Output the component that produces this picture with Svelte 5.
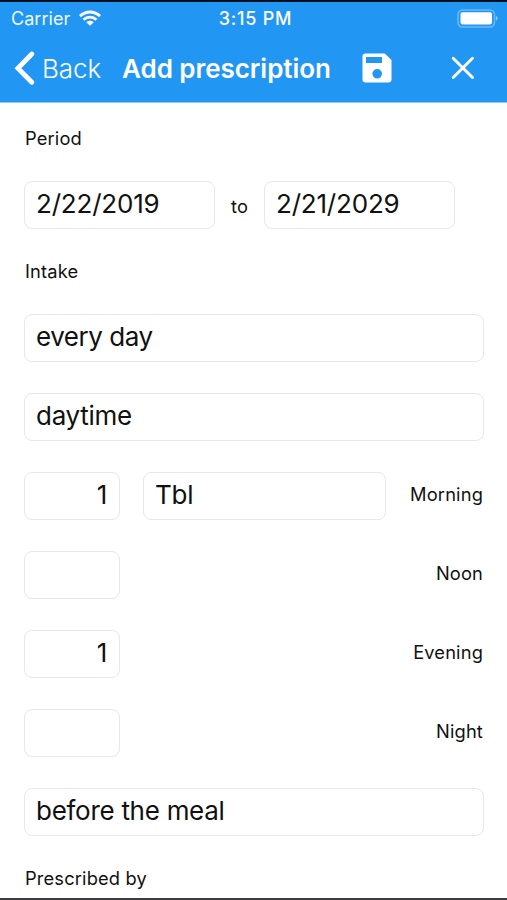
<script>
  const doses = [
    { amount: '1', unit: 'Tbl', time: 'Morning' },
    { amount: '', unit: '', time: 'Noon' },
    { amount: '1', unit: '', time: 'Evening' },
    { amount: '', unit: '', time: 'Night' }
  ];
</script>

<div class="screen">
  <header>
    <div class="status">
      <div class="carrier">
        <span class="carrier-name">Carrier</span>
        <svg width="22" height="16" viewBox="0 0 22 16" fill="none" stroke="#fff" stroke-width="2.9">
          <path d="M1 6.1C6.8.6 15.2.6 21 6.1" />
          <path d="M4.6 9.7c3.7-3.5 9.1-3.5 12.8 0" />
          <path d="M7.3 12.2c2.1-2 5.3-2 7.4 0L11 15.8z" fill="#fff" stroke="none" />
        </svg>
      </div>
      <span class="clock">3:15 PM</span>
      <svg class="battery" width="42" height="19" viewBox="0 0 42 19">
        <rect x="1" y="1" width="36.500" height="17" rx="4.5" fill="none" stroke="#fff" stroke-opacity=".35" stroke-width="1.5" />
        <rect x="3.500" y="3.200" width="31.500" height="12.200" rx="1.800" fill="#fff" />
        <path d="M39 6.8q3.200 2.600 0 5.200z" fill="#fff" fill-opacity=".5" />
      </svg>
    </div>
    <nav>
      <div class="back">
        <svg width="21" height="34" viewBox="0 0 21 34" fill="none" stroke="#fff" stroke-width="4.8" stroke-linecap="round">
          <path d="M17.800 3 3.900 17.200 17.800 31.200" />
        </svg>
        <span>Back</span>
      </div>
      <h1>Add prescription</h1>
      <svg class="save" width="30" height="30" viewBox="0 0 30 30">
        <path fill="#fff" fill-rule="evenodd" d="M3.500.500h19.200L29.500 7v19.300q0 3.200-3.200 3.200H3.700Q.500 29.500.500 26.300V3.500Q.500.500 3.500.500zM4 4v6h16V4zM15.200 16a4.800 4.800 0 1 0 0 9.600 4.800 4.800 0 0 0 0-9.600z" />
      </svg>
      <svg class="close" width="24" height="24" viewBox="0 0 24 24" fill="none" stroke="#fff" stroke-width="2.9" stroke-linecap="round">
        <path d="m2.200 2.200 19.300 19.300M21.500 2.200 2.200 21.500" />
      </svg>
    </nav>
  </header>

  <main>
    <div class="label period">Period</div>
    <div class="row dates">
      <div class="field date">2/22/2019</div>
      <span class="to">to</span>
      <div class="field date">2/21/2029</div>
    </div>
    <div class="label intake">Intake</div>
    <div class="stack">
      <div class="field every">every day</div>
      <div class="field">daytime</div>
      {#each doses as dose}
        <div class="row">
          <div class="field amount">{dose.amount}</div>
          {#if dose.unit}
            <div class="field unit">{dose.unit}</div>
          {/if}
          <span class="time">{dose.time}</span>
        </div>
      {/each}
      <div class="field">before the meal</div>
    </div>
    <div class="label prescribed">Prescribed by</div>
  </main>
</div>

<style>
  .screen {
    box-sizing: border-box;
    width: 507px;
    height: 900px;
    overflow: hidden;
    display: flex;
    flex-direction: column;
    background: #fff;
    color: #111;
    border-top: 2px solid #02101e;
    border-bottom: 2px solid #3c3c3e;
    font-family: Inter, "Liberation Sans", sans-serif;
    font-size: 18.3px;
    letter-spacing: .15px;
    white-space: nowrap;
  }
  header {
    box-sizing: border-box;
    flex: none;
    height: 101px;
    background: #2296f3;
    border-bottom: 1px solid #90c9f8;
    color: #fff;
    letter-spacing: 0;
  }
  .status {
    height: 32px;
    display: grid;
    grid-template-columns: 1fr auto 1fr;
    align-items: center;
    padding: 0 7px 0 11px;
  }
  .carrier {
    display: flex;
    align-items: center;
    gap: 9px;
  }
  .carrier-name { font-size: 18px; letter-spacing: .05px; opacity: .93; }
  .clock { font-weight: 550; font-size: 18px; letter-spacing: .75px; }
  .battery { justify-self: end; margin-right: 1px; }
  nav {
    height: 68px;
    display: flex;
    align-items: center;
  }
  .back {
    box-sizing: border-box;
    width: 121px;
    display: flex;
    align-items: center;
    padding-left: 14px;
    gap: 7px;
    font-size: 26px;
    font-weight: 300;
    letter-spacing: -.1px;
  }
  h1 {
    margin: 0;
    width: 241px;
    padding-left: 1px;
    box-sizing: border-box;
    font-size: 26px;
    font-weight: 600;
    letter-spacing: -.05px;
  }
  .close { margin-left: 59px; }
  main { padding: 0 24px; }
  .label { line-height: 24px; padding-left: 1px; }
  .period { margin-top: 23px; }
  .row { display: flex; align-items: center; }
  .dates { margin-top: 31px; }
  .field {
    box-sizing: border-box;
    height: 48px;
    border: 1px solid #e8e8e8;
    border-radius: 8px;
    padding: 0 11px;
    font-size: 26px;
    line-height: 44px;
    letter-spacing: -.28px;
  }
  .date { width: 191px; letter-spacing: -.2px; }
  .every { letter-spacing: -.45px; }
  .to { width: 49px; text-align: center; padding-top: 1px; }
  .intake { margin-top: 30px; }
  .stack {
    display: flex;
    flex-direction: column;
    gap: 31px;
    margin-top: 31px;
  }
  .stack .field { width: 460px; }
  .stack .field.amount { width: 96px; text-align: right; padding-right: 12px; }
  .stack .field.unit { width: 243px; margin-left: 23px; }
  .time { margin-left: auto; padding: 0 0 4px; }
  .prescribed { margin-top: 30px; }
</style>
